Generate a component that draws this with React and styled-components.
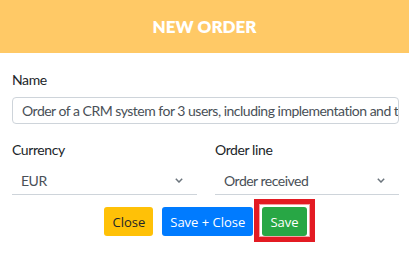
import React from "react";
import styled, { createGlobalStyle } from "styled-components";

const Global = createGlobalStyle`
  html, body { margin: 0; padding: 0; background: #fff; }
  body { font-family: Lato, "Open Sans", sans-serif; color: #212529; }
  * { box-sizing: border-box; }
`;

const Modal = styled.div`
  width: 409px;
  height: 257px;
  background: #fff;
`;

const Header = styled.div`
  height: 53px;
  background: #ffc966;
  display: flex;
  align-items: center;
  justify-content: center;
`;

const Title = styled.h1`
  margin: 0;
  font-size: 17px;
  font-weight: 800;
  color: #fff;
`;

const Body = styled.div`
  padding: 16px 10px 0 12px;
`;

const Group = styled.div`
  display: flex;
  flex-direction: column;
  margin-bottom: ${(p) => p.$mb || 0}px;
`;

const Label = styled.label`
  font-size: 14px;
  line-height: 21px;
  letter-spacing: -0.4px;
  color: #212529;
  margin-bottom: 7px;
`;

const Input = styled.div`
  height: 27px;
  border: 1px solid #ced4da;
  border-radius: 4px;
  padding: 0 9px;
  font-size: 14px;
  line-height: 25px;
  letter-spacing: -0.5px;
  color: #495057;
  white-space: nowrap;
  overflow: hidden;
`;

const Row = styled.div`
  display: grid;
  grid-template-columns: 185px 184px;
  column-gap: 18px;
`;

const Select = styled.div`
  height: 28px;
  border-bottom: 1px solid #ced4da;
  display: flex;
  align-items: center;
  justify-content: space-between;
  padding: 0 14px 0 9px;
  font-size: 14px;
  letter-spacing: -0.5px;
  color: #495057;
`;

const Footer = styled.div`
  display: flex;
  justify-content: center;
  gap: 9px;
  margin-top: 12px;
`;

const Button = styled.button`
  position: relative;
  height: 29px;
  padding: 0 8px;
  border: none;
  border-radius: 3px;
  font-family: "Open Sans", sans-serif;
  font-size: 13px;
  background: ${(p) => p.$bg};
  color: ${(p) => p.$fg};
  outline: none;

  ${(p) =>
    p.$focus &&
    `
    &::after {
      content: "";
      position: absolute;
      inset: -8px -8px -6px -8px;
      border: 5px solid #e31b23;
      box-shadow: inset 0 0 0 1px #f3a3a6;
      pointer-events: none;
    }
  `}
`;

const Chevron = () => (
  <svg width="8" height="5" viewBox="0 0 8 5" fill="none">
    <path d="M0.8 0.8l3.2 3.2 3.2-3.2" stroke="#6c757d" strokeWidth="1.5" />
  </svg>
);

export default function App() {
  return (
    <>
      <Global />
      <Modal>
        <Header>
          <Title>NEW ORDER</Title>
        </Header>
        <Body>
          <Group $mb={15}>
            <Label>Name</Label>
            <Input>Order of a CRM system for 3 users, including implementation and training</Input>
          </Group>
          <Row>
            <Group>
              <Label>Currency</Label>
              <Select>
                <span>EUR</span>
                <Chevron />
              </Select>
            </Group>
            <Group>
              <Label>Order line</Label>
              <Select>
                <span>Order received</span>
                <Chevron />
              </Select>
            </Group>
          </Row>
          <Footer>
            <Button $bg="#ffc107" $fg="#212529">Close</Button>
            <Button $bg="#007bff" $fg="#fff">Save + Close</Button>
            <Button $bg="#28a745" $fg="#fff" $focus>Save</Button>
          </Footer>
        </Body>
      </Modal>
    </>
  );
}
